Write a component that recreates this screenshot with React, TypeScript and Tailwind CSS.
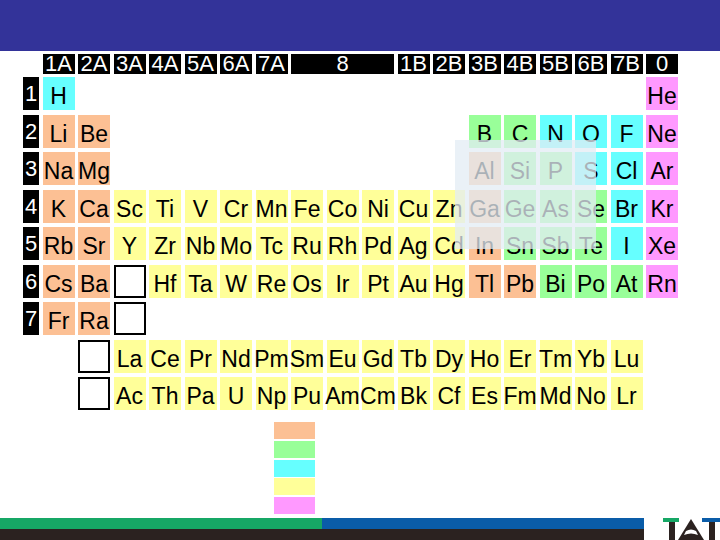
// Periodic table slide
const orange = "bg-[#fcc094]";
const green = "bg-[#99ff99]";
const cyan = "bg-[#66ffff]";
const yellow = "bg-[#ffff99]";
const pink = "bg-[#ff99ff]";

type Cell = { s: string; c: string } | "box" | null;

const heads = ["1A", "2A", "3A", "4A", "5A", "6A", "7A"];
const headsB = ["1B", "2B", "3B", "4B", "5B", "6B", "7B", "0"];

function run(symbols: string, c: string): Cell[] {
  return symbols.split(" ").map((s) => ({ s, c }));
}

function blanks(n: number): Cell[] {
  return Array.from({ length: n }, () => null);
}

const rows: { label?: string; cells: Cell[] }[] = [
  { label: "1", cells: [...run("H", cyan), ...blanks(16), ...run("He", pink)] },
  { label: "2", cells: [...run("Li Be", orange), ...blanks(10), ...run("B C", green), ...run("N O F", cyan), ...run("Ne", pink)] },
  { label: "3", cells: [...run("Na Mg", orange), ...blanks(10), ...run("Al", orange), ...run("Si P", green), ...run("S Cl", cyan), ...run("Ar", pink)] },
  { label: "4", cells: [...run("K Ca", orange), ...run("Sc Ti V Cr Mn Fe Co Ni Cu Zn", yellow), ...run("Ga", orange), ...run("Ge As Se", green), ...run("Br", cyan), ...run("Kr", pink)] },
  { label: "5", cells: [...run("Rb Sr", orange), ...run("Y Zr Nb Mo Tc Ru Rh Pd Ag Cd", yellow), ...run("In", orange), ...run("Sn Sb Te", green), ...run("I", cyan), ...run("Xe", pink)] },
  { label: "6", cells: [...run("Cs Ba", orange), "box", ...run("Hf Ta W Re Os Ir Pt Au Hg", yellow), ...run("Tl Pb", orange), ...run("Bi Po At", green), ...run("Rn", pink)] },
  { label: "7", cells: [...run("Fr Ra", orange), "box", ...blanks(15)] },
  { cells: [null, "box", ...run("La Ce Pr Nd Pm Sm Eu Gd Tb Dy Ho Er Tm Yb Lu", yellow), null] },
  { cells: [null, "box", ...run("Ac Th Pa U Np Pu Am Cm Bk Cf Es Fm Md No Lr", yellow), null] },
];

const legend = [orange, green, cyan, yellow, pink];

function Element({ cell }: { cell: Cell }) {
  if (cell === null) return <div className="h-[33px]" />;
  if (cell === "box") return <div className="h-[33px] border-2 border-black bg-white" />;
  return (
    <div className={`h-[33px] flex items-center justify-center whitespace-nowrap ${cell.c}`}>
      <span className="translate-y-[3px]">{cell.s}</span>
    </div>
  );
}

export default function App() {
  return (
    <div className="w-[720px] h-[540px] bg-white overflow-hidden flex flex-col font-['Liberation_Sans',Arial,sans-serif] text-[23px] leading-none text-black">
      <div className="h-[51px] bg-[#333399] shrink-0" />

      {/* table */}
      <div className="relative pl-[23px] pt-[3px]">
        <div className="grid grid-cols-[16px_repeat(18,32px)] gap-x-[3.5px] gap-y-[4.5px]">
          {/* group headers */}
          <div />
          {heads.map((h) => (
            <div key={h} className="h-[20px] bg-black text-white text-[22px] flex items-center justify-center mb-[-1.5px]">{h}</div>
          ))}
          <div className="col-span-3 h-[20px] bg-black text-white text-[22px] flex items-center justify-center mb-[-1.5px]">8</div>
          {headsB.map((h) => (
            <div key={h} className="h-[20px] bg-black text-white text-[22px] flex items-center justify-center mb-[-1.5px]">{h}</div>
          ))}

          {rows.map((r, i) => (
            <div key={i} className="contents">
              {r.label ? (
                <div className="h-[33px] bg-black text-white text-[22px] flex justify-center pt-[6px]">{r.label}</div>
              ) : (
                <div />
              )}
              {r.cells.map((cell, j) => (
                <Element key={j} cell={cell} />
              ))}
            </div>
          ))}
        </div>

        {/* translucent panel over the table */}
        <div className="absolute left-[455px] top-[89px] w-[141px] h-[109px] bg-[#e3ecf4] opacity-75" />
      </div>

      {/* legend */}
      <div className="ml-[274px] mt-[12px] flex flex-col gap-[1.75px] w-[41px]">
        {legend.map((c) => (
          <div key={c} className={`h-[17px] ${c}`} />
        ))}
      </div>

      {/* footer bands */}
      <div className="mt-auto flex items-end">
        <div className="w-[644px] flex flex-col">
          <div className="flex h-[11px]">
            <div className="w-[322px] bg-[#16a765]" />
            <div className="flex-1 bg-[#0a5ca8]" />
          </div>
          <div className="h-[11px] bg-[#2b2220]" />
        </div>
        <svg viewBox="0 0 76 22" className="w-[76px] h-[22px]">
          <rect x="19" y="0" width="16" height="4" fill="#16a765" />
          <rect x="25" y="4" width="6" height="18" fill="#2b2220" />
          <path d="M47 1 L60 22 L34 22 Z" fill="#2b2220" />
          <path d="M42 13 Q47 10 52 13 L54 17 Q47 14 40 17 Z" fill="#ffffff" />
          <rect x="58" y="0" width="18" height="4" fill="#0a5ca8" />
          <rect x="65" y="4" width="6" height="18" fill="#2b2220" />
        </svg>
      </div>
    </div>
  );
}
